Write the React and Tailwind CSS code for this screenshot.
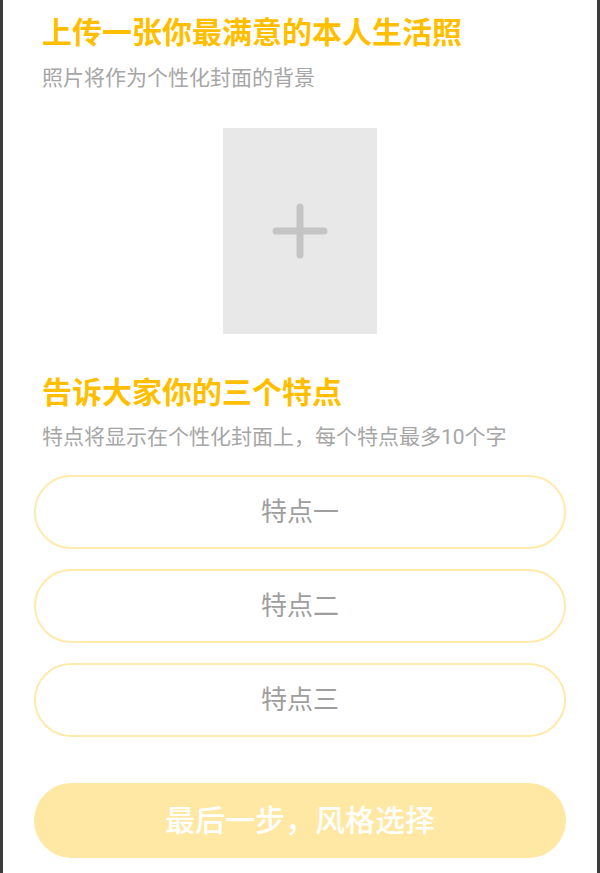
import React from "react";

const font = { fontFamily: 'Roboto, "Noto Sans CJK SC", "Noto Sans", sans-serif' };

function Field({ label }) {
  return (
    <div className="h-[74px] w-full rounded-full border-2 border-[#ffeaad] flex items-center justify-center">
      <span className="text-[26px] leading-[26px] text-[#9e9e9e]">{label}</span>
    </div>
  );
}

export default function App() {
  return (
    <div className="w-[600px] h-[873px] flex bg-white overflow-hidden" style={font}>
      <div className="w-[3px] h-full bg-[#3b3b3b]" />
      <div className="flex-1 flex flex-col px-[31px]">
        <h1 className="mt-[18px] pl-[8px] text-[30px] leading-[30px] font-bold text-[#ffbf00]">
          上传一张你最满意的本人生活照
        </h1>
        <p className="mt-[20px] pl-[8px] text-[21px] leading-[21px] text-[#a6a6a6]">
          照片将作为个性化封面的背景
        </p>
        <div className="mt-[39px] self-center w-[154px] h-[206px] bg-[#e8e8e8] flex items-center justify-center">
          <svg width="56" height="56" viewBox="0 0 56 56">
            <path d="M28 4 V52 M4 28 H52" stroke="#c4c4c4" strokeWidth="7" strokeLinecap="round" fill="none" />
          </svg>
        </div>
        <h2 className="mt-[44px] pl-[8px] text-[30px] leading-[30px] font-bold text-[#ffbf00]">
          告诉大家你的三个特点
        </h2>
        <p className="mt-[19px] pl-[8px] text-[21px] leading-[21px] text-[#a6a6a6]">
          特点将显示在个性化封面上，每个特点最多10个字
        </p>
        <div className="mt-[27px] flex flex-col gap-[20px]">
          <Field label="特点一" />
          <Field label="特点二" />
          <Field label="特点三" />
        </div>
        <button className="mt-[46px] h-[75px] w-full rounded-full bg-[#ffe8a4] flex items-center justify-center">
          <span className="text-[30px] leading-[30px] font-medium text-white">最后一步，风格选择</span>
        </button>
      </div>
      <div className="w-[3px] h-full bg-[#3b3b3b]" />
    </div>
  );
}
